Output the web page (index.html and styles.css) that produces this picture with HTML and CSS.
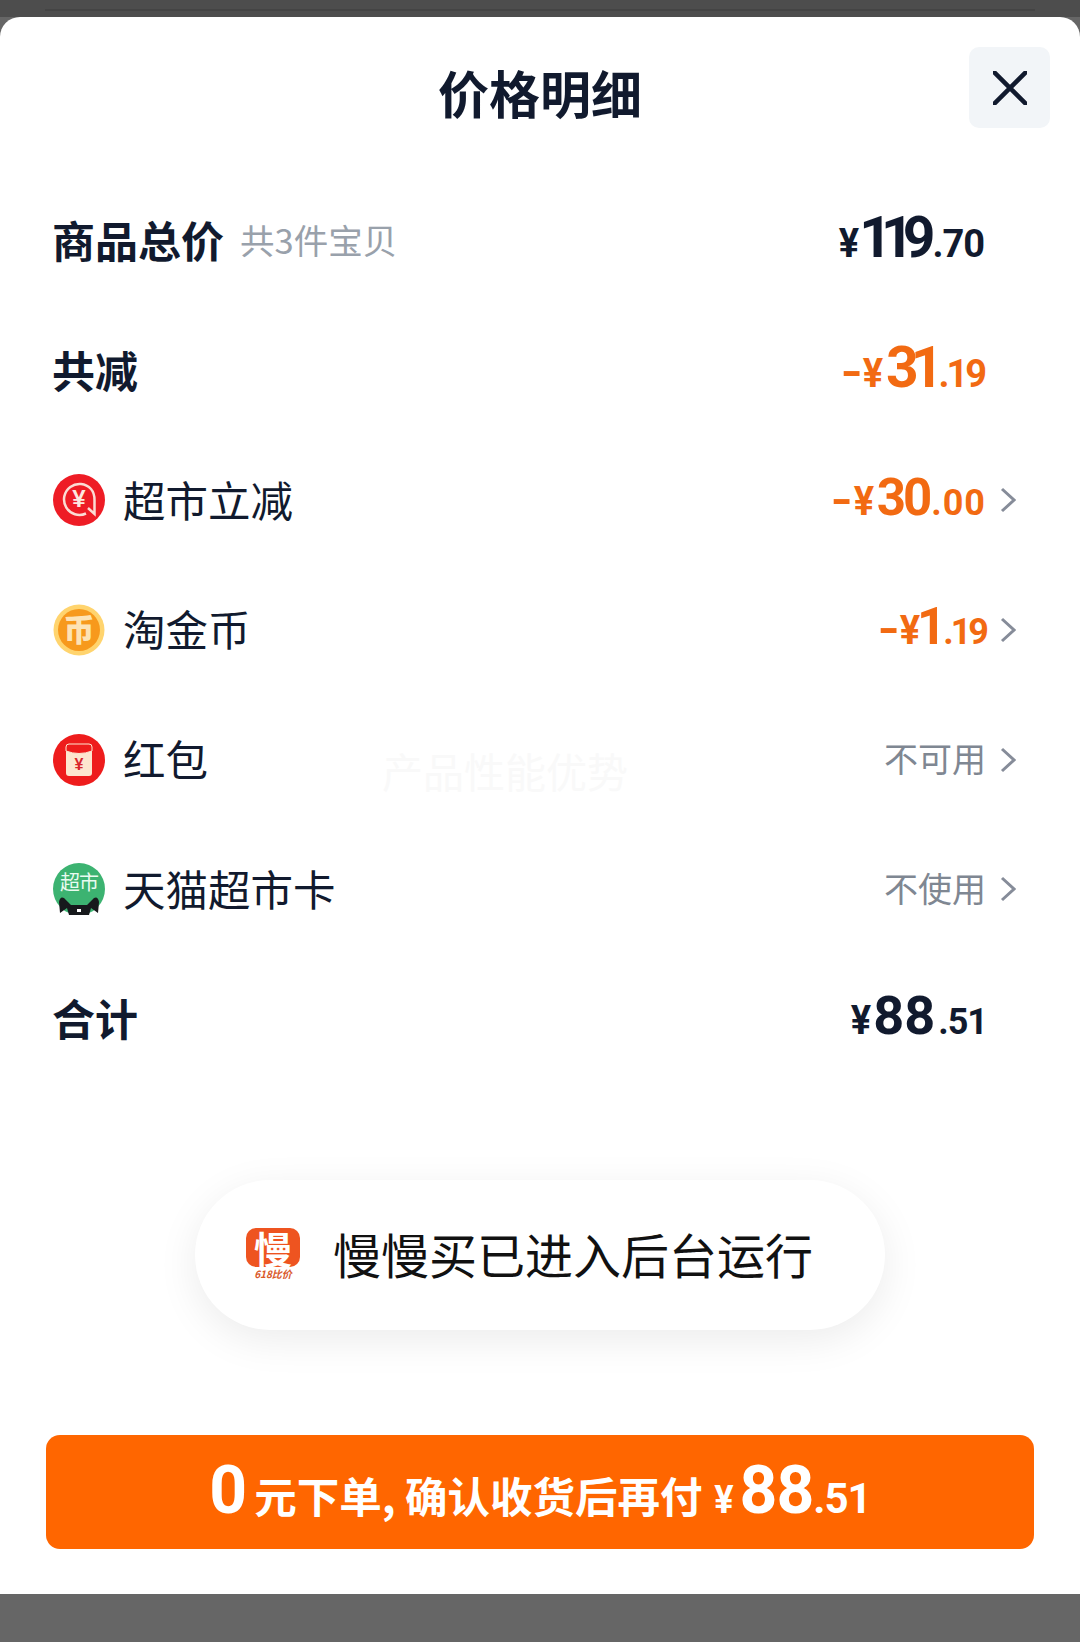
FILE: index.html
```html
<!DOCTYPE html>
<html lang="zh">
<head>
<meta charset="utf-8">
<title>价格明细</title>
<link rel="stylesheet" href="styles.css">
</head>
<body>
<div class="page">
  <div class="backdrop"><div class="backdrop-line"></div></div>
  <main class="sheet">
    <header class="head">
      <span></span>
      <h1 class="title">价格明细</h1>
      <button class="close" aria-label="关闭">
        <svg class="close-x" viewBox="0 0 34 34"><path d="M1.5 1.5 32.5 32.5M32.5 1.5 1.5 32.5"/></svg>
      </button>
    </header>
    <section class="rows">
      <div class="row">
        <div class="left"><span class="strong">商品总价</span><span class="sub">共3件宝贝</span></div>
        <div class="price flush"><span class="yen y119">¥</span><span class="big d119">119</span><span class="cents">.70</span></div>
      </div>
      <div class="row">
        <div class="left"><span class="strong">共减</span></div>
        <div class="price flush orange"><span class="minus">-</span><span class="yen">¥</span><span class="big d31">31</span><span class="cents c19">.19</span></div>
      </div>
      <div class="row">
        <div class="left">
          <svg class="icon" viewBox="0 0 52 52"><circle cx="26" cy="26" r="26" fill="#ee1c25"/><path d="M33 39.500A15.500 15.500 0 1 1 38 15Q41.500 19 41.500 26V40L35 34" fill="none" stroke="#fbdcd4" stroke-width="2.500"/><text class="icon-yen" x="26" y="33" text-anchor="middle" fill="#fde8e0">¥</text></svg>
          <span class="name">超市立减</span>
        </div>
        <div class="right">
          <div class="price mid orange"><span class="minus">-</span><span class="yen">¥</span><span class="big d30">30</span><span class="cents">.00</span></div>
          <svg class="chev" viewBox="0 0 16 26"><path d="M2 2 14 13 2 24"/></svg>
        </div>
      </div>
      <div class="row">
        <div class="left">
          <svg class="icon" viewBox="0 0 52 52"><circle cx="26" cy="26" r="25.500" fill="#ffd46e"/><circle cx="26" cy="26" r="21" fill="#f7991c"/><text class="icon-coin" x="26" y="37" text-anchor="middle" fill="#fde3b5">币</text></svg>
          <span class="name">淘金币</span>
        </div>
        <div class="right">
          <div class="price mid orange"><span class="minus">-</span><span class="yen">¥</span><span class="big d1">1</span><span class="cents c19">.19</span></div>
          <svg class="chev" viewBox="0 0 16 26"><path d="M2 2 14 13 2 24"/></svg>
        </div>
      </div>
      <div class="row">
        <div class="left">
          <svg class="icon" viewBox="0 0 52 52"><circle cx="26" cy="26" r="26" fill="#ee1c1c"/><rect x="13" y="10" width="26" height="32" rx="3" fill="#fde6cf"/><path d="M13 13a3 3 0 0 1 3-3h20a3 3 0 0 1 3 3v4Q26 22 13 17z" fill="#ee1c1c" stroke="#fde6cf" stroke-width="1"/><text class="icon-red" x="26" y="36" text-anchor="middle" fill="#d8262b">¥</text></svg>
          <span class="name">红包</span>
        </div>
        <div class="right">
          <span class="muted">不可用</span>
          <svg class="chev" viewBox="0 0 16 26"><path d="M2 2 14 13 2 24"/></svg>
        </div>
      </div>
      <div class="row">
        <div class="left">
          <svg class="icon" viewBox="0 0 52 52"><circle cx="26" cy="26" r="26" fill="#3cb371"/><text class="icon-shop" x="26" y="27" text-anchor="middle" fill="#e9fbf0">超市</text><path d="M7 50 6 39Q7 33 11 35L18 42H34L41 35Q45 33 46 39L45 50 38 45 36 52H16L14 45z" fill="#17191c"/><rect x="24" y="46" width="4" height="3" fill="#fff"/></svg>
          <span class="name">天猫超市卡</span>
        </div>
        <div class="right">
          <span class="muted">不使用</span>
          <svg class="chev" viewBox="0 0 16 26"><path d="M2 2 14 13 2 24"/></svg>
        </div>
      </div>
      <div class="row">
        <div class="left"><span class="strong">合计</span></div>
        <div class="price flush total"><span class="yen">¥</span><span class="big">88</span><span class="cents">.51</span></div>
      </div>
    </section>
    <footer class="foot">
      <button class="pay"><span class="pay-zero">0</span><span class="pay-text">元下单, 确认收货后再付</span><span class="pay-yen">¥</span><span class="pay-big">88</span><span class="pay-cents">.51</span></button>
    </footer>
    <div class="watermark">产品性能优势</div>
    <div class="toast">
      <div class="logo">
        <div class="logo-box">慢</div>
        <div class="logo-sub">618比价</div>
      </div>
      <span class="toast-text">慢慢买已进入后台运行</span>
    </div>
  </main>
  <div class="bottom"></div>
</div>
</body>
</html>
```
FILE: styles.css
```css
* { box-sizing: border-box; }
html, body { margin: 0; padding: 0; }
body {
  font-family: "Noto Sans CJK SC", "Noto Sans", sans-serif;
  color: #111a2e;
  background: #666;
}
.page { width: 1080px; height: 1642px; display: flex; flex-direction: column; overflow: hidden; }
.backdrop { height: 17px; background: #4d4d4d; padding: 9px 45px 0; flex: none; }
.backdrop-line { height: 2px; background: #444; }
.sheet {
  position: relative;
  flex: 1;
  display: flex;
  flex-direction: column;
  background: #fff;
  border-radius: 20px 20px 0 0;
}
.bottom { height: 48px; background: #666; flex: none; }

.head {
  height: 159px;
  flex: none;
  padding: 30px 0 0;
  display: grid;
  grid-template-columns: 1fr auto 1fr;
  align-items: start;
}
.title {
  margin: 5px 0 0;
  font-size: 51px;
  line-height: 80px;
  font-weight: 700;
  color: #111a2e;
}
.close {
  justify-self: end;
  width: 81px;
  height: 81px;
  margin-right: 30px;
  padding: 0;
  border: 0;
  border-radius: 10px;
  background: #f2f5f8;
  display: flex;
  align-items: center;
  justify-content: center;
}
.close-x { width: 34px; height: 34px; fill: none; stroke: #111a2e; stroke-width: 4.500; stroke-linecap: round; }

.rows { display: flex; flex-direction: column; flex: none; }
.row {
  height: 129.700px;
  padding: 0 64px 0 53px;
  display: flex;
  align-items: center;
  justify-content: space-between;
}
.left { display: flex; align-items: center; }
.right { display: flex; align-items: center; gap: 14px; }
.strong { font-size: 43px; font-weight: 700; line-height: 60px; margin-bottom: 4px; margin-left: -1px; }
.sub { margin-left: 16px; font-size: 34.500px; line-height: 60px; color: #99a1ab; margin-bottom: 3px; }
.name { margin-left: 18px; font-size: 42.500px; line-height: 60px; font-weight: 400; margin-bottom: 3px; }
.icon { width: 52px; height: 52px; flex: none; }
.icon-yen { font: 700 24px "Liberation Sans", sans-serif; }
.icon-coin { font: 900 31px "Noto Sans CJK SC", sans-serif; }
.icon-red { font: 700 16px "Liberation Sans", sans-serif; }
.icon-shop { font: 400 20px "Noto Sans CJK SC", sans-serif; letter-spacing: -1px; }

.price {
  display: flex;
  align-items: baseline;
  font-family: "Roboto", sans-serif;
  font-weight: 700;
  line-height: 60px;
  color: #111a2e;
}
.flush { margin-right: 32px; }
.orange { color: #f26a12; }
.minus { display: inline-block; font-size: 44px; margin-right: 2px; transform: scaleX(1.3); }
.yen { display: inline-block; font-size: 40px; width: 22px; text-align: center; margin-right: 2px; transform: scaleX(0.95); }
.yen.y119 { margin-right: -1px; }
.big { font-size: 57px; }
.cents { font-size: 38px; letter-spacing: -1px; }
.d119 { letter-spacing: -11px; margin-right: 8px; }
.d31 { letter-spacing: -8px; margin-right: 3px; }
.mid .big { font-size: 51px; }
.mid .cents { font-size: 36px; letter-spacing: 1px; }
.mid .d30 { letter-spacing: -3px; margin-right: 2px; }
.mid .d1 { margin: 0 -3px 0 -6px; }
.cents.c19, .mid .cents.c19 { letter-spacing: -3px; }
.total { margin-right: 29px; }
.total .yen { margin-right: 1px; }
.total .big { font-size: 54px; margin-right: 3px; }
.total .cents { font-size: 36px; letter-spacing: -1px; }
.muted { font-size: 34px; line-height: 60px; color: #7f8792; margin-bottom: 3px; }
.chev { width: 16px; height: 26px; flex: none; fill: none; stroke: #868c99; stroke-width: 3; }

.foot { margin-top: auto; padding: 0 46px 45px; }
.pay {
  width: 100%;
  height: 114px;
  border: 0;
  border-radius: 14px;
  background: #ff6600;
  color: #fff;
  display: flex;
  align-items: baseline;
  justify-content: center;
  padding: 21px 0 0;
  font-family: "Noto Sans CJK SC", sans-serif;
  font-weight: 700;
}
.pay-zero { font: 700 66px/70px "Roboto", sans-serif; margin-right: 7px; }
.pay-text { font-size: 42.500px; line-height: 70px; }
.pay-yen { display: inline-block; font: 700 38px/70px "Roboto", sans-serif; width: 22px; margin-left: 10px; margin-right: 5px; transform: scaleX(0.95); }
.pay-big { font: 700 66px/70px "Roboto", sans-serif; letter-spacing: -1px; }
.pay-cents { font: 700 42px/70px "Roboto", sans-serif; letter-spacing: -1px; }

.watermark {
  position: absolute;
  left: 382px;
  top: 723px;
  font-size: 41px;
  line-height: 60px;
  color: #f9f9f9;
  font-weight: 400;
}
.toast {
  position: absolute;
  left: 195px;
  top: 1163px;
  width: 690px;
  height: 150px;
  border-radius: 75px;
  background: #fff;
  box-shadow: 0 10px 40px rgba(0, 0, 0, 0.08);
  display: flex;
  align-items: center;
  padding-left: 51px;
  gap: 33px;
}
.logo { width: 54px; flex: none; display: flex; flex-direction: column; align-items: center; margin-bottom: 2px; }
.logo-box {
  width: 54px;
  height: 39px;
  border-radius: 10px;
  background: #ee5420;
  color: #fff;
  font-size: 38px;
  font-weight: 700;
  line-height: 39px;
  text-align: center;
}
.logo-sub { font-size: 10px; line-height: 13px; font-weight: 700; font-style: italic; color: #d9592a; white-space: nowrap; }
.toast-text { font-size: 48px; line-height: 60px; color: #111; font-weight: 400; margin-bottom: 4px; }
```
